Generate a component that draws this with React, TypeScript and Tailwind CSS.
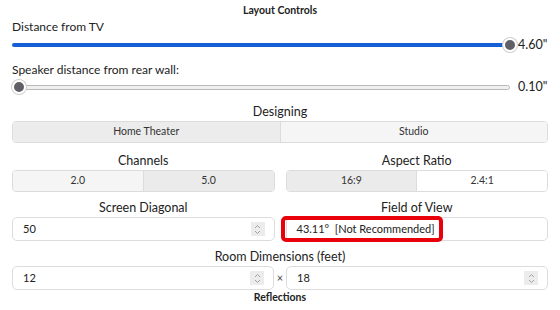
import React from 'react';

const font = { fontFamily: 'Lato, "Noto Sans", sans-serif' };

function Slider({ pct, value, filled }: { pct: number; value: string; filled: boolean }) {
  return (
    <div className="flex items-center h-[16px] pl-[12px] pr-[12px]">
      <div className="relative flex-1 h-[16px] flex items-center">
        {filled ? (
          <div className="w-full h-[4px] rounded-full bg-[#1560d4]" />
        ) : (
          <div className="w-[calc(100%+8px)] h-[5px] rounded-full border border-[#b9b9b9] bg-[#f0f0f0]" />
        )}
        {/* thumb */}
        <div
          className="absolute top-[1px] w-[14px] h-[14px] rounded-full bg-[#5f5f66] border-2 border-white shadow-[0_0_0_1px_#d0d0d0] -translate-x-1/2"
          style={{ left: `${pct}%` }}
        />
      </div>
      <span className="ml-[8px] w-[30px] text-[12.5px] text-[#222] leading-none">{value}</span>
    </div>
  );
}

function Segmented({ items }: { items: { label: string; bg: string }[] }) {
  return (
    <div className="flex h-[22px] rounded-[4px] border border-[#dcdcdc] overflow-hidden">
      {items.map((it, i) => (
        <div
          key={it.label}
          className={`flex-1 flex items-center justify-center text-[10.5px] text-[#333] ${it.bg} ${i > 0 ? 'border-l border-[#dcdcdc]' : ''}`}
        >
          {it.label}
        </div>
      ))}
    </div>
  );
}

function Spinner() {
  return (
    <div className="w-[14px] h-[14px] bg-[#ececec] flex items-center justify-center">
      <svg width="7" height="11" viewBox="0 0 7 11" fill="none" stroke="#9a9a9a" strokeWidth="0.9">
        <path d="M1 4 L3.5 1.5 L6 4" />
        <path d="M1 7 L3.5 9.5 L6 7" />
      </svg>
    </div>
  );
}

function NumberInput({ value, spinner = true }: { value: string; spinner?: boolean }) {
  return (
    <div className="flex-1 flex items-center h-[24px] rounded-[5px] border border-[#dcdcdc] bg-white pl-[10px] pr-[9px]">
      <span className="flex-1 text-[11px] text-[#222] whitespace-pre">{value}</span>
      {spinner && <Spinner />}
    </div>
  );
}

function Label({ children, className = '' }: { children: React.ReactNode; className?: string }) {
  return <div className={`h-[16px] flex items-center justify-center text-[12.5px] ${className}`}>{children}</div>;
}

export default function App() {
  return (
    <div className="w-[560px] h-[310px] bg-white overflow-hidden text-[#222]" style={font}>
      <div className="pt-[3px] h-[19px] flex items-center justify-center text-[10.5px] font-bold">Layout Controls</div>

      <div className="px-[12px] h-[16px] flex items-center text-[12px]">Distance from TV</div>
      <div className="mt-[2px]">
        <Slider pct={100} value={'4.60"'} filled />
      </div>

      <div className="px-[12px] mt-[9px] h-[16px] flex items-center text-[12px]">Speaker distance from rear wall:</div>
      <div className="mt-[1px]">
        <Slider pct={1.4} value={'0.10"'} filled={false} />
      </div>

      <div className="px-[12px]">
        <Label className="mt-[9px]">Designing</Label>
        <div className="mt-[1px]">
          <Segmented
            items={[
              { label: 'Home Theater', bg: 'bg-[#ececec]' },
              { label: 'Studio', bg: 'bg-[#f5f5f5]' },
            ]}
          />
        </div>

        <div className="mt-[10px] grid grid-cols-2 gap-x-[11px]">
          <Label>Channels</Label>
          <Label>Aspect Ratio</Label>
          <div className="mt-[1px]">
            <Segmented
              items={[
                { label: '2.0', bg: 'bg-[#f5f5f5]' },
                { label: '5.0', bg: 'bg-[#ebebeb]' },
              ]}
            />
          </div>
          <div className="mt-[1px]">
            <Segmented
              items={[
                { label: '16:9', bg: 'bg-[#ebebeb]' },
                { label: '2.4:1', bg: 'bg-white' },
              ]}
            />
          </div>

          <Label className="mt-[8px]">Screen Diagonal</Label>
          <Label className="mt-[8px]">Field of View</Label>
          <div className="mt-[1px] flex">
            <NumberInput value="50" />
          </div>
          <div className="mt-[1px] flex relative">
            <NumberInput value={'43.11°  [Not Recommended]'} spinner={false} />
            {/* annotation highlight */}
            <div className="absolute left-[-5px] top-[-1px] w-[162px] h-[26px] rounded-[5px] border-[4px] border-[#e8000b]" />
          </div>
        </div>

        <Label className="mt-[8px]">Room Dimensions (feet)</Label>
        <div className="mt-[1px] flex items-center">
          <NumberInput value="12" />
          <span className="w-[12px] text-center text-[11px] text-[#444]">×</span>
          <NumberInput value="18" />
        </div>

        <div className="h-[16px] flex items-center justify-center text-[10.5px] font-bold">Reflections</div>
      </div>
    </div>
  );
}
